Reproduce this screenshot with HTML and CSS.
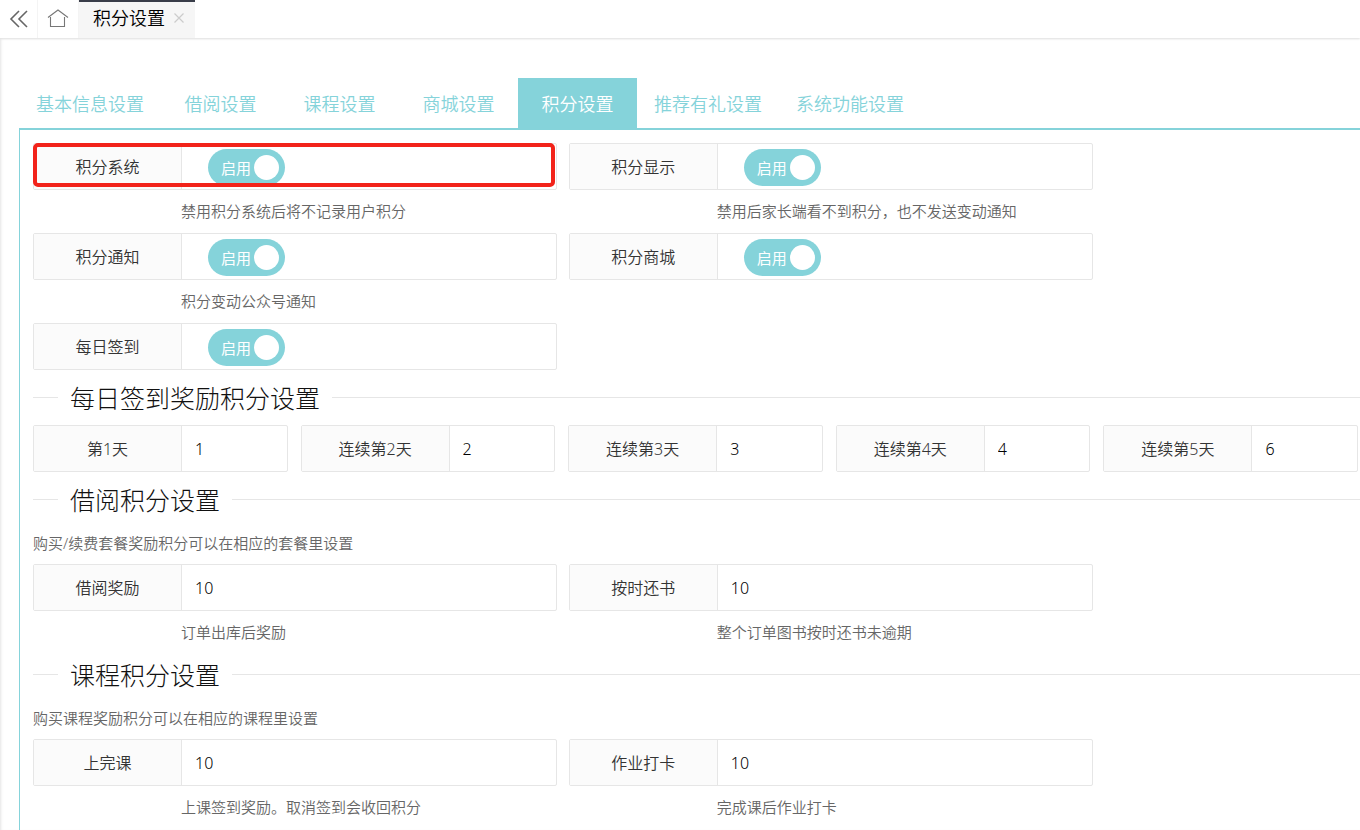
FILE: index.html
```html
<!DOCTYPE html>
<html lang="zh-CN">
<head>
<meta charset="utf-8">
<title>积分设置</title>
<link rel="stylesheet" href="styles.css">
</head>
<body>
<header class="topbar">
  <button class="topbar-btn" type="button" aria-label="收起菜单">
    <svg width="20" height="20" viewBox="0 0 20 20" fill="none" stroke="#666" stroke-width="1.6"><path d="M10 2 2 10l8 8M18 2l-8 8 8 8"/></svg>
  </button>
  <button class="topbar-btn topbar-home" type="button" aria-label="首页">
    <svg width="22" height="20" viewBox="0 0 22 20" fill="none" stroke="#777" stroke-width="1.1"><path d="M1 8.5 11 1l10 7.5M3.5 8v9.5h14V8"/></svg>
  </button>
  <div class="page-tab">
    <span>积分设置</span>
    <button class="page-tab-close" type="button" aria-label="关闭">
      <svg width="10" height="10" viewBox="0 0 10 10" fill="none" stroke="#ccc" stroke-width="1.2"><path d="M0.5 0.5l9 9M9.5 0.5l-9 9"/></svg>
    </button>
  </div>
</header>

<main class="page">
  <nav class="tabs">
    <a class="tab" href="#">基本信息设置</a>
    <a class="tab" href="#">借阅设置</a>
    <a class="tab" href="#">课程设置</a>
    <a class="tab" href="#">商城设置</a>
    <a class="tab tab-active" href="#" aria-current="page">积分设置</a>
    <a class="tab" href="#">推荐有礼设置</a>
    <a class="tab" href="#">系统功能设置</a>
  </nav>

  <form class="panel">
    <div class="grid grid-wide">
      <div class="cell">
        <div class="field highlighted">
          <label class="label" for="sys">积分系统</label>
          <label class="switch"><input type="checkbox" id="sys" checked><span>启用</span></label>
        </div>
        <p class="help">禁用积分系统后将不记录用户积分</p>
      </div>
      <div class="cell">
        <div class="field">
          <label class="label" for="show">积分显示</label>
          <label class="switch"><input type="checkbox" id="show" checked><span>启用</span></label>
        </div>
        <p class="help">禁用后家长端看不到积分，也不发送变动通知</p>
      </div>
      <div class="cell">
        <div class="field">
          <label class="label" for="notice">积分通知</label>
          <label class="switch"><input type="checkbox" id="notice" checked><span>启用</span></label>
        </div>
        <p class="help">积分变动公众号通知</p>
      </div>
      <div class="cell">
        <div class="field">
          <label class="label" for="mall">积分商城</label>
          <label class="switch"><input type="checkbox" id="mall" checked><span>启用</span></label>
        </div>
      </div>
      <div class="cell">
        <div class="field">
          <label class="label" for="daily">每日签到</label>
          <label class="switch"><input type="checkbox" id="daily" checked><span>启用</span></label>
        </div>
      </div>
    </div>

    <h2 class="section">每日签到奖励积分设置</h2>
    <div class="grid">
      <div class="field"><label class="label" for="d1">第1天</label><input class="input" id="d1" type="text" value="1"></div>
      <div class="field"><label class="label" for="d2">连续第2天</label><input class="input" id="d2" type="text" value="2"></div>
      <div class="field"><label class="label" for="d3">连续第3天</label><input class="input" id="d3" type="text" value="3"></div>
      <div class="field"><label class="label" for="d4">连续第4天</label><input class="input" id="d4" type="text" value="4"></div>
      <div class="field"><label class="label" for="d5">连续第5天</label><input class="input" id="d5" type="text" value="6"></div>
    </div>

    <h2 class="section">借阅积分设置</h2>
    <p class="note">购买/续费套餐奖励积分可以在相应的套餐里设置</p>
    <div class="grid grid-wide">
      <div class="cell">
        <div class="field"><label class="label" for="borrow">借阅奖励</label><input class="input" id="borrow" type="text" value="10"></div>
        <p class="help">订单出库后奖励</p>
      </div>
      <div class="cell">
        <div class="field"><label class="label" for="return">按时还书</label><input class="input" id="return" type="text" value="10"></div>
        <p class="help">整个订单图书按时还书未逾期</p>
      </div>
    </div>

    <h2 class="section section-spaced">课程积分设置</h2>
    <p class="note">购买课程奖励积分可以在相应的课程里设置</p>
    <div class="grid grid-wide">
      <div class="cell">
        <div class="field"><label class="label" for="class">上完课</label><input class="input" id="class" type="text" value="10"></div>
        <p class="help">上课签到奖励。取消签到会收回积分</p>
      </div>
      <div class="cell">
        <div class="field"><label class="label" for="homework">作业打卡</label><input class="input" id="homework" type="text" value="10"></div>
        <p class="help">完成课后作业打卡</p>
      </div>
    </div>
  </form>
</main>
</body>
</html>
```

FILE: styles.css
```css
* {
  box-sizing: border-box;
}

body {
  margin: 0;
  min-height: 100vh;
  display: flex;
  flex-direction: column;
  background: #fff;
  box-shadow: inset 3px 0 3px -2px #e4e4e4;
  color: #333;
  font-family: "Noto Sans", "Noto Sans CJK SC", sans-serif;
  font-size: 16px;
  font-weight: 350;
}

button,
input {
  font: inherit;
  margin: 0;
}

.topbar {
  display: flex;
  height: 38px;
  background: #fff;
  box-shadow: 0 1px 2px #ddd;
}

.topbar-btn {
  display: flex;
  align-items: center;
  justify-content: center;
  width: 38px;
  padding: 0;
  border: 0;
  border-right: 1px solid #f4f4f4;
  background: none;
}

.topbar-home {
  width: 41px;
}

.page-tab {
  display: flex;
  align-items: center;
  gap: 9px;
  padding: 0 11px 4px 14px;
  border-top: 2px solid #393d49;
  background: #f6f6f6;
  color: #000;
  font-size: 18px;
  line-height: 24px;
}

.page-tab-close {
  display: flex;
  padding: 0;
  border: 0;
  background: none;
}

.page {
  flex: 1;
  display: flex;
  flex-direction: column;
  padding: 40px 0 0 19px;
}

.tabs {
  display: flex;
  border-bottom: 2px solid #85d3da;
}

.tab {
  min-width: 119px;
  padding: 2px 17px 0;
  color: #85d3da;
  font-size: 18px;
  line-height: 48px;
  text-align: center;
  text-decoration: none;
  white-space: nowrap;
}

.tab-active {
  background: #85d3da;
  color: #fff;
}

.panel {
  flex: 1;
  padding: 13px 0 10px 13px;
  border-left: 1px solid #85d3da;
}

.grid {
  display: grid;
  grid-template-columns: repeat(5, minmax(0, 1fr));
  gap: 12px 13px;
  margin-right: 2px;
}

.grid-wide {
  grid-template-columns: repeat(2, minmax(0, 1fr));
  gap: 12px;
  width: calc(80% - 2px);
}

.field {
  position: relative;
  display: flex;
  align-items: center;
  height: 47px;
  border: 1px solid #e6e6e6;
  border-radius: 2px;
}

.highlighted::after {
  content: "";
  position: absolute;
  inset: -1px 1px 2px -1px;
  border: 4px solid #f2231a;
  border-radius: 5px;
  pointer-events: none;
}

.label {
  flex: none;
  width: 148px;
  padding-top: 2px;
  border-right: 1px solid #e6e6e6;
  background: #fbfbfb;
  line-height: 43px;
  text-align: center;
  white-space: nowrap;
}

.input {
  flex: 1;
  min-width: 0;
  height: 45px;
  padding: 0 13px;
  border: 0;
  background: none;
  color: #000;
  outline: none;
}

.switch {
  display: flex;
  flex-direction: row-reverse;
  align-items: center;
  justify-content: space-between;
  width: 77px;
  height: 37px;
  margin: 2px 0 0 26px;
  padding: 0 6px 0 13px;
  border-radius: 19px;
  background: #85d3da;
  color: #fff;
  font-size: 15px;
  font-weight: 400;
  line-height: 20px;
}

.switch input {
  width: 25px;
  height: 25px;
  border-radius: 50%;
  background: #fff;
  appearance: none;
}

.help,
.note {
  margin: 0;
  color: #666;
  font-size: 15px;
  line-height: 20px;
}

.help {
  margin: 11px 0 0 148px;
}

.note {
  margin: 17px 0 11px;
}

.section {
  display: flex;
  align-items: center;
  gap: 12px;
  margin: 12px 0 11px;
  color: #111;
  font-size: 25px;
  font-weight: 300;
  line-height: 32px;
}

.section::before,
.section::after {
  content: "";
  width: 25px;
  height: 1px;
  margin-bottom: 2px;
  background: #e6e6e6;
}

.section::after {
  flex: 1;
}

.section-spaced {
  margin-top: 17px;
}
```
